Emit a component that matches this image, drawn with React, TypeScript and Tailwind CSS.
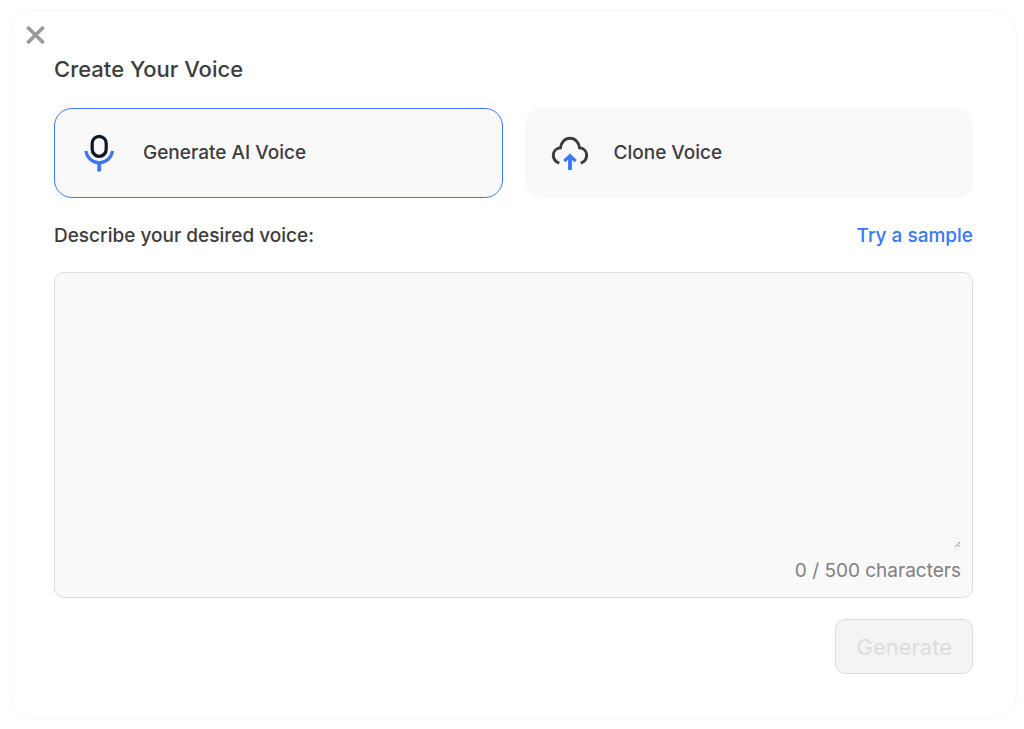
import { useState } from "react";
import clsx from "clsx";

const MAX_CHARS = 500;
const SAMPLE = "A warm, calm narrator with a slight British accent.";

function CloseIcon() {
  return (
    <svg className="w-5 h-5" viewBox="0 0 20 20" fill="none" stroke="currentColor" strokeWidth="3.6">
      <path d="M1.4 1.9 17.6 18.1M17.6 1.9 1.4 18.1" />
    </svg>
  );
}

function MicIcon() {
  return (
    <svg className="w-9 h-[38px]" viewBox="0 0 36 38" fill="none" aria-hidden="true">
      <rect x="11.2" y="2.3" width="14" height="20" rx="7" stroke="#0f1626" strokeWidth="3.2" />
      <path d="M4.8 17C6.2 24 11.5 28.8 18.2 28.8S30.2 24 31.6 17" stroke="#3b76f6" strokeWidth="3.2" />
      <path d="M18.2 28.8V37.5" stroke="#3b76f6" strokeWidth="3.8" />
    </svg>
  );
}

function CloudUploadIcon() {
  return (
    <svg className="w-[38px] h-[34px]" viewBox="0 0 38 34" fill="none" aria-hidden="true">
      <path
        d="M8.3 27.2C4.6 25.8 2.3 22.8 2.3 19.3C2.3 15.3 5.3 12.2 9.4 11.8C10 6.3 14 2.2 19 2.2S28 6.3 28.6 11.8C32.7 12.2 35.7 15.3 35.7 19.3C35.7 22.8 33.4 25.8 29.7 27.2"
        stroke="#3c3c3c"
        strokeWidth="3"
      />
      <path d="M13.3 25.2 19 19.8 24.7 25.2" stroke="#3b76f6" strokeWidth="3.2" />
      <path d="M19 20.5V34" stroke="#3b76f6" strokeWidth="3.8" />
    </svg>
  );
}

const MODES = [
  { id: "generate", icon: MicIcon, text: "Generate AI Voice" },
  { id: "clone", icon: CloudUploadIcon, text: "Clone Voice" },
];

export default function App() {
  const [mode, setMode] = useState("generate");
  const [description, setDescription] = useState("");

  return (
    <div className="min-h-screen bg-white pt-[10px] pl-[10px] pr-[7px] font-['Inter',sans-serif] text-[#3c3c3c]">
      <div role="dialog" aria-labelledby="title" className="rounded-3xl border border-[#f7f7f7] pt-[14px] pb-11 px-[43px]">
        {/* Close sits out in the gutter, left of the content */}
        <button type="button" aria-label="Close" className="block -ml-7 text-[#999999]">
          <CloseIcon />
        </button>

        <h1 id="title" className="mt-[10px] text-[22px] leading-7 font-medium">Create Your Voice</h1>

        {/* Mode cards */}
        <div className="mt-[25px] grid grid-cols-2 gap-[22px]">
          {MODES.map(({ id, icon: Icon, text }) => (
            <button
              key={id}
              type="button"
              aria-pressed={mode === id}
              onClick={() => setMode(id)}
              className={clsx(
                "h-[90px] px-6 flex items-center gap-6 rounded-[18px] border bg-[#f9f9f9] text-[19px] leading-7 font-medium",
                mode === id ? "border-[#3b76f6]" : "border-transparent"
              )}
            >
              <span className="w-10 flex justify-center">
                <Icon />
              </span>
              {text}
            </button>
          ))}
        </div>

        <div className="mt-6 flex items-center justify-between text-[19px] leading-7 font-medium">
          <label htmlFor="description">Describe your desired voice:</label>
          <button type="button" onClick={() => setDescription(SAMPLE)} className="text-[#3b76f6]">
            Try a sample
          </button>
        </div>

        {/* Description box */}
        <div className="mt-[22px] rounded-[10px] border border-[#dcdcdc] bg-[#f9f9f9] p-[11px] pb-3">
          <div className="relative">
            <textarea
              id="description"
              maxLength={MAX_CHARS}
              value={description}
              onChange={(e) => setDescription(e.target.value)}
              className="block w-full h-[264px] resize-none bg-transparent text-[19px] leading-7 outline-none"
            />
            <svg className="absolute right-0 bottom-0 w-[7px] h-[7px]" viewBox="0 0 7 7" stroke="#808080" strokeWidth="0.9" aria-hidden="true">
              <path d="M1 6 6 1M4 6 6 4" />
            </svg>
          </div>
          <p className="mt-[9px] text-right text-[19px] leading-7 text-[#808080]">
            {description.length} / {MAX_CHARS} characters
          </p>
        </div>

        <div className="mt-[21px] flex justify-end">
          <button
            type="button"
            disabled={!description}
            className="h-[55px] px-5 rounded-[10px] border border-[#3b76f6] bg-[#3b76f6] text-[22px] leading-7 text-white
                       disabled:border-[#dcdcdc] disabled:bg-[#f4f4f4] disabled:text-[#dcdcdc]"
          >
            Generate
          </button>
        </div>
      </div>
    </div>
  );
}
